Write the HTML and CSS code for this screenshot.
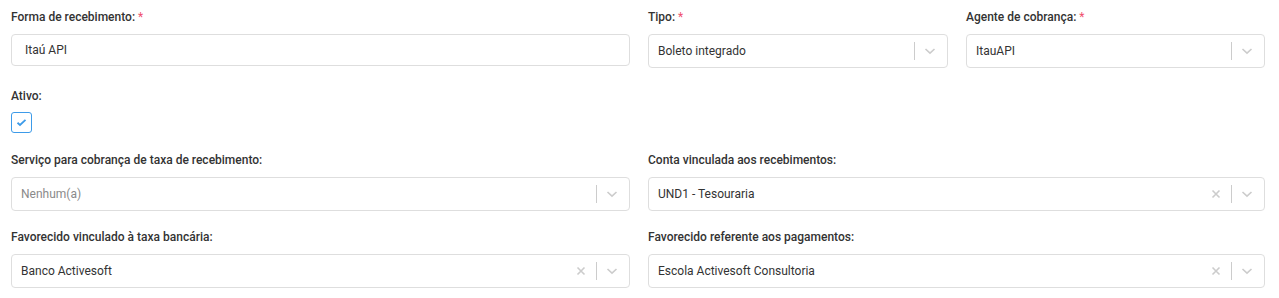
FILE: index.html
```html
<!DOCTYPE html>
<html lang="pt-BR">
<head>
  <meta charset="UTF-8" />
  <meta name="viewport" content="width=device-width, initial-scale=1" />
  <title>Forma de recebimento</title>
  <link rel="stylesheet" href="styles.css">
</head>
<body>

  <form class="form">

    <div class="row">
      <div class="field span-2">
        <label>Forma de recebimento: <span class="req">*</span></label>
        <input class="input" type="text" value="Itaú API" />
      </div>
      <div class="field">
        <label>Tipo: <span class="req">*</span></label>
        <div class="select">
          <div class="select-value">Boleto integrado</div>
          <span class="sep"></span>
          <span class="indicator">
            <svg width="14" height="14" viewBox="0 0 14 14"><polyline points="2.5,5 7,9.2 11.5,5" /></svg>
          </span>
        </div>
      </div>
      <div class="field">
        <label>Agente de cobrança: <span class="req">*</span></label>
        <div class="select">
          <div class="select-value">ItauAPI</div>
          <span class="sep"></span>
          <span class="indicator">
            <svg width="14" height="14" viewBox="0 0 14 14"><polyline points="2.5,5 7,9.2 11.5,5" /></svg>
          </span>
        </div>
      </div>
    </div>

    <div class="row row-check">
      <div class="field span-2">
        <label>Ativo:</label>
        <span class="checkbox">
          <svg width="11" height="9" viewBox="0 0 11 9"><polyline points="1.5,4.8 4,7 9.5,1.8" /></svg>
        </span>
      </div>
    </div>

    <div class="row">
      <div class="field span-2">
        <label>Serviço para cobrança de taxa de recebimento:</label>
        <div class="select">
          <div class="select-value placeholder">Nenhum(a)</div>
          <span class="sep"></span>
          <span class="indicator">
            <svg width="14" height="14" viewBox="0 0 14 14"><polyline points="2.5,5 7,9.2 11.5,5" /></svg>
          </span>
        </div>
      </div>
      <div class="field span-2">
        <label>Conta vinculada aos recebimentos:</label>
        <div class="select">
          <div class="select-value">UND1 - Tesouraria</div>
          <span class="indicator">
            <svg width="14" height="14" viewBox="0 0 14 14"><path d="M3.5 3.5 L10.5 10.5 M10.5 3.5 L3.5 10.5" /></svg>
          </span>
          <span class="sep"></span>
          <span class="indicator">
            <svg width="14" height="14" viewBox="0 0 14 14"><polyline points="2.5,5 7,9.2 11.5,5" /></svg>
          </span>
        </div>
      </div>
    </div>

    <div class="row">
      <div class="field span-2">
        <label>Favorecido vinculado à taxa bancária:</label>
        <div class="select">
          <div class="select-value">Banco Activesoft</div>
          <span class="indicator">
            <svg width="14" height="14" viewBox="0 0 14 14"><path d="M3.5 3.5 L10.5 10.5 M10.5 3.5 L3.5 10.5" /></svg>
          </span>
          <span class="sep"></span>
          <span class="indicator">
            <svg width="14" height="14" viewBox="0 0 14 14"><polyline points="2.5,5 7,9.2 11.5,5" /></svg>
          </span>
        </div>
      </div>
      <div class="field span-2">
        <label>Favorecido referente aos pagamentos:</label>
        <div class="select">
          <div class="select-value">Escola Activesoft Consultoria</div>
          <span class="indicator">
            <svg width="14" height="14" viewBox="0 0 14 14"><path d="M3.5 3.5 L10.5 10.5 M10.5 3.5 L3.5 10.5" /></svg>
          </span>
          <span class="sep"></span>
          <span class="indicator">
            <svg width="14" height="14" viewBox="0 0 14 14"><polyline points="2.5,5 7,9.2 11.5,5" /></svg>
          </span>
        </div>
      </div>
    </div>

  </form>

</body>
</html>
```

FILE: styles.css
```css
:root {
  --text-color: #333;
  --border-color: #dedede;
  --icon-color: #cccccc;
  --required: #f0506e;
  --accent: #3d9be9;
  --font-main: Roboto, "Liberation Sans", sans-serif;
}

body {
  margin: 0;
  font-family: var(--font-main);
  color: var(--text-color);
  background: #fff;
}

.form {
  padding: 10px 14px 0 11px;
}

.row {
  display: grid;
  grid-template-columns: 300.5fr 300.5fr 300fr 299fr;
  column-gap: 18px;
  align-items: start;
  margin-bottom: 19px;
}

.row:first-child {
  margin-bottom: 21px;
}

.row.row-check {
  margin-bottom: 20px;
}

.field.span-2 {
  grid-column: span 2;
}

.field label {
  display: block;
  font-size: 12px;
  line-height: 15px;
  font-weight: 500;
  margin-bottom: 9px;
}

.req {
  color: var(--required);
  font-weight: 400;
}

.input {
  box-sizing: border-box;
  display: block;
  width: 100%;
  height: 32px;
  padding: 0 13px;
  border: 1px solid var(--border-color);
  border-radius: 4px;
  font-family: var(--font-main);
  font-size: 12px;
  color: var(--text-color);
  outline: none;
}

.select {
  box-sizing: border-box;
  display: flex;
  align-items: center;
  height: 34px;
  padding-right: 2px;
  border: 1px solid var(--border-color);
  border-radius: 4px;
  background: #fff;
}

.select-value {
  flex: 1;
  padding-left: 9px;
  font-size: 12px;
  white-space: nowrap;
  overflow: hidden;
}

.select-value.placeholder {
  color: #8a8a8a;
}

.sep {
  width: 1px;
  height: 18px;
  background: var(--icon-color);
}

.indicator {
  width: 30px;
  display: flex;
  justify-content: center;
  align-items: center;
}

.indicator svg {
  fill: none;
  stroke: var(--icon-color);
  stroke-width: 1.6;
}

.row-check label {
  margin-bottom: 8px;
}

.checkbox {
  box-sizing: border-box;
  display: flex;
  justify-content: center;
  align-items: center;
  width: 21px;
  height: 21px;
  border: 1px solid var(--accent);
  border-radius: 3px;
}

.checkbox svg {
  fill: none;
  stroke: var(--accent);
  stroke-width: 1.8;
}
```
